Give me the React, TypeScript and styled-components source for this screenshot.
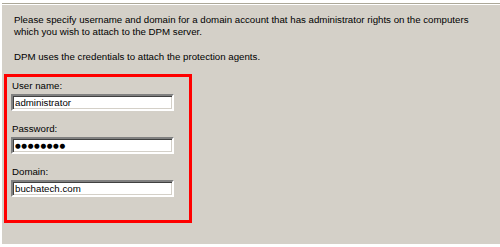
import React from 'react'
import styled, { createGlobalStyle } from 'styled-components'

const GlobalStyle = createGlobalStyle`
  html, body {
    margin: 0;
    padding: 0;
    background: #ffffff;
  }
  body {
    font-family: "Liberation Sans", Arial, sans-serif;
  }
`

const Page = styled.div`
  width: 500px;
  height: 247px;
  box-sizing: border-box;
  padding: 3px 0 3px 2px;
  background: #ffffff;
  display: flex;
`

const Panel = styled.div`
  flex: 1;
  display: flex;
  flex-direction: column;
  background: #d4d0c8;
  border-top: 1px solid #aca899;
  box-shadow: inset 0 1px 0 #ffffff;
  padding: 10px 0 0 2px;
  color: #000;
  font-size: 9.7px;
  line-height: 12px;
`

const Intro = styled.p`
  margin: 0 0 0 10px;
  width: 475px;
`

const Note = styled.p`
  margin: 13px 0 0 10px;
`

const CredentialsBox = styled.div`
  margin-top: 11px;
  width: 188px;
  height: 149px;
  box-sizing: border-box;
  border: 3px solid #ff0000;
  padding: 3px 0 0 4px;
  display: flex;
  flex-direction: column;
  gap: 12px;
`

const Field = styled.div`
  display: flex;
  flex-direction: column;
  gap: 2px;
`

const Label = styled.label`
  padding-left: 1px;
  line-height: 12px;
`

const TextBox = styled.input`
  width: 163px;
  height: 17px;
  box-sizing: border-box;
  margin: 0;
  padding: 0 2px;
  border: 2px solid;
  border-color: #808080 #ffffff #ffffff #808080;
  box-shadow: inset 1px 1px 0 #404040, inset -1px -1px 0 #d4d0c8;
  background: #ffffff;
  font-family: "Liberation Sans", "DejaVu Sans", Arial, sans-serif;
  font-size: 9.7px;
  color: #000;
  outline: none;
`

const MaskedBox = styled(TextBox)`
  font-family: "DejaVu Sans", sans-serif;
  font-size: 6.6px;
  letter-spacing: 0.6px;
`

export default function App() {
  return (
    <>
      <GlobalStyle />
      <Page>
        <Panel>
          <Intro>
            Please specify username and domain for a domain account that has administrator rights on the computers
            which you wish to attach to the DPM server.
          </Intro>
          <Note>DPM uses the credentials to attach the protection agents.</Note>
          <CredentialsBox>
            <Field>
              <Label htmlFor="user">User name:</Label>
              <TextBox id="user" readOnly value="administrator" />
            </Field>
            <Field>
              <Label htmlFor="pass">Password:</Label>
              <MaskedBox id="pass" readOnly value="●●●●●●●●" />
            </Field>
            <Field>
              <Label htmlFor="domain">Domain:</Label>
              <TextBox id="domain" readOnly value="buchatech.com" />
            </Field>
          </CredentialsBox>
        </Panel>
      </Page>
    </>
  )
}
